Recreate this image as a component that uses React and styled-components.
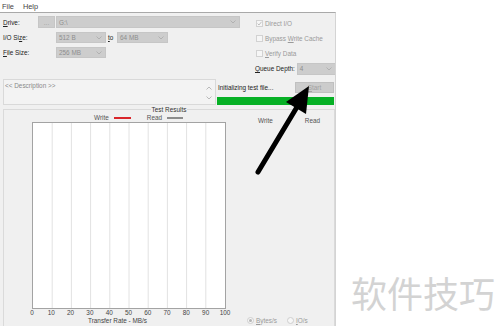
import React from "react";
import styled, { createGlobalStyle } from "styled-components";

const Global = createGlobalStyle`
  html, body { margin: 0; padding: 0; background: #ffffff; overflow: hidden; }
  body { font-family: "Liberation Sans", Arial, sans-serif; font-size: 6.4px; color: #222; }
`;

const Page = styled.div`
  position: relative;
  width: 500px;
  height: 326px;
  overflow: hidden;
  display: grid;
  grid-template-columns: 336px 1fr;
  grid-template-rows: 12px 314px;
`;

const MenuBar = styled.div`
  grid-column: 1;
  grid-row: 1;
  display: flex;
  align-items: center;
  gap: 9px;
  padding-left: 2px;
  font-size: 7.4px;
  color: #444;
`;

const Window = styled.div`
  grid-column: 1;
  grid-row: 2;
  background: #f0f0f0;
  border-top: 1px solid #a9a9a9;
  border-right: 1px solid #d4d4d4;
  display: flex;
  flex-direction: column;
  overflow: hidden;
`;

const Top = styled.div`
  display: flex;
  padding: 3px 1px 0 3px;
  height: 60px;
`;

const LeftForm = styled.div`
  width: 237px;
  display: grid;
  grid-template-rows: 12px 11px 11px;
  row-gap: 4px;
  align-content: start;
`;

const FormRow = styled.div`
  display: flex;
  align-items: center;
`;

const Label = styled.span`
  width: ${(p) => p.$w}px;
  flex: none;
  color: ${(p) => (p.$muted ? "#9a9a9a" : "#222")};
  white-space: nowrap;
`;

const Key = styled.span`
  text-decoration: underline;
`;

const Combo = styled.div`
  box-sizing: border-box;
  width: ${(p) => p.$w}px;
  height: 100%;
  margin-left: ${(p) => p.$ml || 0}px;
  flex: none;
  background: #cdcdcd;
  border: 1px solid #c6c6c6;
  color: #8e8e8e;
  display: flex;
  align-items: center;
  justify-content: space-between;
  padding: 0 3px 0 2px;
`;

const Chevron = ({ up }) => (
  <svg width="6" height="4" viewBox="0 0 6 4">
    <path
      d={up ? "M0.5 3.5 L3 1 L5.5 3.5" : "M0.5 0.5 L3 3 L5.5 0.5"}
      fill="none"
      stroke="#a9a9a9"
      strokeWidth="0.8"
    />
  </svg>
);

const DotsButton = styled.div`
  box-sizing: border-box;
  width: 17px;
  height: 100%;
  margin-right: 1px;
  background: #cdcdcd;
  border: 1px solid #c6c6c6;
  color: #9e9e9e;
  display: flex;
  align-items: center;
  justify-content: center;
`;

const RightOptions = styled.div`
  margin-left: 16px;
  width: 78px;
  display: grid;
  grid-template-rows: repeat(4, 15px);
`;

const OptRow = styled.div`
  display: flex;
  align-items: center;
  justify-content: ${(p) => (p.$between ? "space-between" : "flex-start")};
  gap: 2px;
  margin-left: ${(p) => p.$ml || 0}px;
`;

const Box = styled.span`
  box-sizing: border-box;
  width: 7px;
  height: 7px;
  border: 1px solid #d2d2d2;
  background: #f6f6f6;
  display: flex;
  align-items: center;
  justify-content: center;
`;

const SmallCombo = styled(Combo)`
  height: 12px;
`;

const Row5 = styled.div`
  display: flex;
  margin: 3px 1px 0 3px;
  height: 27px;
`;

const Description = styled.div`
  box-sizing: border-box;
  width: 213px;
  height: 100%;
  border: 1px solid #d9d9d9;
  background: #f3f3f3;
  color: #8a8a8a;
  display: flex;
  justify-content: space-between;
  padding: 2px 3px 0 1px;
`;

const ScrollArrows = styled.div`
  display: flex;
  flex-direction: column;
  justify-content: space-between;
  padding: 4px 0 4px;
`;

const Status = styled.div`
  flex: 1;
  margin-left: 1px;
  display: flex;
  flex-direction: column;
  padding-top: 3px;
  gap: 4px;
`;

const StatusTop = styled.div`
  height: 11px;
  display: flex;
  align-items: center;
  justify-content: space-between;
  padding-left: 1px;
`;

const StartButton = styled.div`
  box-sizing: border-box;
  width: 39px;
  height: 11px;
  background: #cccccc;
  border: 1px solid #c0c0c0;
  color: #a2a2a2;
  display: flex;
  align-items: center;
  justify-content: center;
`;

const Progress = styled.div`
  height: 8px;
  background: #06b025;
`;

const Panel = styled.fieldset`
  margin: 0 0 0 3px;
  padding: 0 0 6px 0;
  border: 1px solid #dadada;
  min-width: 0;
`;

const PanelTitle = styled.legend`
  margin: 0 auto;
  padding: 0 1px;
  line-height: 9px;
  font-size: 6.4px;
  color: #333;
`;

const PanelBody = styled.div`
  display: grid;
  grid-template-columns: 236px 1fr;
  height: 210px;
`;

const ChartArea = styled.div`
  display: flex;
  flex-direction: column;
`;

const LegendRow = styled.div`
  height: 7px;
  display: flex;
  align-items: center;
  padding-left: 90px;
  color: #555;
`;

const Swatch = styled.span`
  width: ${(p) => p.$w}px;
  height: 2px;
  background: ${(p) => p.$c};
  margin: 0 ${(p) => p.$mr}px 0 5px;
`;

const PlotWrap = styled.div`
  margin: 1px 0 0 28px;
  height: 187px;
`;

const AxisLabels = styled.div`
  display: flex;
  width: 212.3px;
  margin-left: 18.35px;
  height: 7px;
  align-items: center;
  color: #444;
`;

const Tick = styled.span`
  flex: 1;
  text-align: center;
`;

const AxisTitle = styled.div`
  padding-left: 84px;
  height: 8px;
  display: flex;
  align-items: center;
  color: #444;
`;

const Results = styled.div`
  display: flex;
  flex-direction: column;
  justify-content: space-between;
`;

const ResultsHead = styled.div`
  margin-top: 3px;
  height: 7px;
  display: flex;
  align-items: center;
  gap: 32px;
  padding-left: 18px;
  color: #555;
`;

const RadioRow = styled.div`
  height: 8px;
  display: flex;
  align-items: center;
  padding-left: 7px;
  color: #9a9a9a;
`;

const Radio = styled.span`
  box-sizing: border-box;
  width: 7px;
  height: 7px;
  border-radius: 50%;
  border: 1px solid #cfcfcf;
  background: #f7f7f7;
  margin-right: 2px;
  margin-left: ${(p) => p.$ml || 0}px;
  display: flex;
  align-items: center;
  justify-content: center;
  &::after {
    content: "";
    width: 3px;
    height: 3px;
    border-radius: 50%;
    background: ${(p) => (p.$on ? "#b5b5b5" : "transparent")};
  }
`;

const Aside = styled.div`
  grid-column: 2;
  grid-row: 1 / span 2;
  display: flex;
  align-items: flex-end;
  justify-content: flex-end;
  padding: 0 5px 16px 0;
  font-family: "Noto Sans CJK SC", sans-serif;
  font-size: 36px;
  line-height: 1;
  color: #d3d3d3;
`;

const Overlay = styled.svg`
  position: absolute;
  left: 0;
  top: 0;
  pointer-events: none;
`;

const Plot = () => {
  const w = 194;
  const h = 187;
  const step = 192 / 10;
  const lines = [];
  for (let i = 1; i < 10; i++) {
    const x = 0.5 + i * step + 0.5;
    lines.push(<line key={i} x1={x} y1={1} x2={x} y2={h - 1} stroke="#e2e2e2" strokeWidth="1" />);
  }
  return (
    <svg width={w} height={h} viewBox={`0 0 ${w} ${h}`} style={{ display: "block" }}>
      <rect x="0.5" y="0.5" width={w - 1} height={h - 1} fill="#ffffff" stroke="#a3a3a3" />
      {lines}
    </svg>
  );
};

const Check = () => (
  <svg width="5" height="5" viewBox="0 0 5 5">
    <path d="M0.6 2.6 L2 4 L4.5 0.8" fill="none" stroke="#b0b0b0" strokeWidth="0.8" />
  </svg>
);

export default function App() {
  const ticks = [0, 10, 20, 30, 40, 50, 60, 70, 80, 90, 100];
  return (
    <>
      <Global />
      <Page>
        <MenuBar>
          <span>File</span>
          <span>Help</span>
        </MenuBar>
        <Window>
          <Top>
            <LeftForm>
              <FormRow>
                <Label $w={35}>
                  <Key>D</Key>rive:
                </Label>
                <DotsButton>...</DotsButton>
                <Combo $w={184}>
                  <span>G:\</span>
                  <Chevron />
                </Combo>
              </FormRow>
              <FormRow>
                <Label $w={53}>
                  I/O Si<Key>z</Key>e:
                </Label>
                <Combo $w={50}>
                  <span>512 B</span>
                  <Chevron />
                </Combo>
                <Label $w={9} style={{ marginLeft: 2 }}>
                  <Key>t</Key>o
                </Label>
                <Combo $w={51}>
                  <span>64 MB</span>
                  <Chevron />
                </Combo>
              </FormRow>
              <FormRow>
                <Label $w={53}>
                  <Key>F</Key>ile Size:
                </Label>
                <Combo $w={50}>
                  <span>256 MB</span>
                  <Chevron />
                </Combo>
              </FormRow>
            </LeftForm>
            <RightOptions>
              <OptRow>
                <Box>
                  <Check />
                </Box>
                <Label $muted>Direct I/O</Label>
              </OptRow>
              <OptRow>
                <Box />
                <Label $muted>
                  Bypass <Key>W</Key>rite Cache
                </Label>
              </OptRow>
              <OptRow>
                <Box />
                <Label $muted>
                  <Key>V</Key>erify Data
                </Label>
              </OptRow>
              <OptRow $between $ml={-1}>
                <Label>
                  <Key>Q</Key>ueue Depth:
                </Label>
                <SmallCombo $w={39}>
                  <span>4</span>
                  <Chevron />
                </SmallCombo>
              </OptRow>
            </RightOptions>
          </Top>
          <Row5>
            <Description>
              <span>&lt;&lt; Description &gt;&gt;</span>
              <ScrollArrows>
                <Chevron up />
                <Chevron />
              </ScrollArrows>
            </Description>
            <Status>
              <StatusTop>
                <span>Initializing test file...</span>
                <StartButton>
                  <span>
                    <Key>S</Key>tart
                  </span>
                </StartButton>
              </StatusTop>
              <Progress />
            </Status>
          </Row5>
          <Panel>
            <PanelTitle>Test Results</PanelTitle>
            <PanelBody>
              <ChartArea>
                <LegendRow>
                  <span>Write</span>
                  <Swatch $w={17} $c="#d9262b" $mr={16} />
                  <span>Read</span>
                  <Swatch $w={16} $c="#8c8c8c" $mr={0} />
                </LegendRow>
                <PlotWrap>
                  <Plot />
                </PlotWrap>
                <AxisLabels>
                  {ticks.map((t) => (
                    <Tick key={t}>{t}</Tick>
                  ))}
                </AxisLabels>
                <AxisTitle>Transfer Rate - MB/s</AxisTitle>
              </ChartArea>
              <Results>
                <ResultsHead>
                  <span>Write</span>
                  <span>Read</span>
                </ResultsHead>
                <RadioRow>
                  <Radio $on />
                  <span>
                    <Key>B</Key>ytes/s
                  </span>
                  <Radio $ml={10} />
                  <span>
                    <Key>I</Key>O/s
                  </span>
                </RadioRow>
              </Results>
            </PanelBody>
          </Panel>
        </Window>
        <Aside>软件技巧</Aside>
        <Overlay width="500" height="326" viewBox="0 0 500 326">
          <line x1="258" y1="172" x2="297" y2="107" stroke="#000" strokeWidth="5" strokeLinecap="round" />
          <polygon points="309,86 286,102 306,114" fill="#000" />
        </Overlay>
      </Page>
    </>
  );
}
